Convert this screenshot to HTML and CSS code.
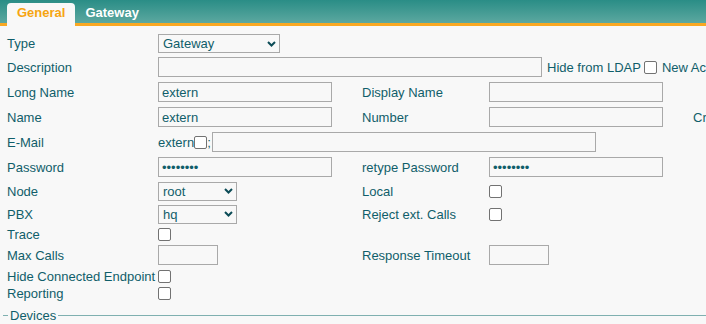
FILE: index.html
```html
<!DOCTYPE html>
<html lang="en">
<head>
  <meta charset="UTF-8">
  <meta name="viewport" content="width=device-width, initial-scale=1.0">
  <title>Gateway extern</title>
  <link rel="stylesheet" href="styles.css">
</head>
<body>
  <div class="tabs">
    <div class="tab tab-active">General</div>
    <div class="tab">Gateway</div>
  </div>

  <form class="config">
    <label class="lbl">Type</label>
    <div class="fld">
      <div class="select w-type"><span>Gateway</span><svg width="9" height="6" viewBox="0 0 9 6"><path d="M1 1 L4.5 4.5 L8 1" fill="none" stroke="#0c4c57" stroke-width="2"/></svg></div>
    </div>

    <label class="lbl">Description</label>
    <div class="fld span3">
      <input type="text" class="text w-desc">
      <span class="after">Hide from LDAP</span>
      <input type="checkbox" class="check gap-l">
      <span class="after">New Account</span>
    </div>

    <label class="lbl">Long Name</label>
    <div class="fld"><input type="text" class="text w-med" value="extern"></div>
    <label class="lbl2">Display Name</label>
    <div class="fld"><input type="text" class="text w-med"></div>

    <label class="lbl">Name</label>
    <div class="fld"><input type="text" class="text w-med" value="extern"></div>
    <label class="lbl2">Number</label>
    <div class="fld"><input type="text" class="text w-med"></div>
    <div class="fld">Create</div>

    <label class="lbl">E-Mail</label>
    <div class="fld span3">
      <span>extern</span><input type="checkbox" class="check mail-check"><span>;</span>
      <input type="text" class="text w-desc mail-input">
    </div>

    <label class="lbl">Password</label>
    <div class="fld"><input type="password" class="text w-med" value="password"></div>
    <label class="lbl2">retype Password</label>
    <div class="fld"><input type="password" class="text w-med" value="password"></div>

    <label class="lbl">Node</label>
    <div class="fld">
      <div class="select w-small"><span>root</span><svg width="9" height="6" viewBox="0 0 9 6"><path d="M1 1 L4.5 4.5 L8 1" fill="none" stroke="#0c4c57" stroke-width="2"/></svg></div>
    </div>
    <label class="lbl2">Local</label>
    <div class="fld"><input type="checkbox" class="check"></div>

    <label class="lbl">PBX</label>
    <div class="fld">
      <div class="select w-small"><span>hq</span><svg width="9" height="6" viewBox="0 0 9 6"><path d="M1 1 L4.5 4.5 L8 1" fill="none" stroke="#0c4c57" stroke-width="2"/></svg></div>
    </div>
    <label class="lbl2">Reject ext. Calls</label>
    <div class="fld"><input type="checkbox" class="check"></div>

    <label class="lbl">Trace</label>
    <div class="fld"><input type="checkbox" class="check"></div>

    <label class="lbl">Max Calls</label>
    <div class="fld"><input type="text" class="text w-num"></div>
    <label class="lbl2">Response Timeout</label>
    <div class="fld"><input type="text" class="text w-num"></div>

    <label class="lbl">Hide Connected Endpoint</label>
    <div class="fld"><input type="checkbox" class="check"></div>

    <label class="lbl">Reporting</label>
    <div class="fld"><input type="checkbox" class="check"></div>
  </form>

  <fieldset class="devices">
    <legend>Devices</legend>
  </fieldset>
</body>
</html>
```

FILE: styles.css
```css
body {
  margin: 0;
  width: 706px;
  height: 324px;
  overflow: hidden;
  background-color: #f8f8f8;
  font-family: "Liberation Sans", Arial, sans-serif;
  font-size: 13px;
  color: #105e6a;
}

.tabs {
  display: flex;
  align-items: flex-end;
  height: 23px;
  padding-left: 7px;
  background: linear-gradient(#2a8d86, #5ca8a0);
  border-bottom: 3px solid #f9a823;
}

.tab {
  height: 23px;
  line-height: 20px;
  margin-bottom: -3px;
  padding: 0 10px;
  box-sizing: border-box;
  font-weight: bold;
  color: #ffffff;
  white-space: nowrap;
}

.tab-active {
  background-color: #f8f8f8;
  border-radius: 4px 4px 0 0;
  color: #f6a511;
}

.config {
  display: grid;
  grid-template-columns: 151px 204px 127px 204px 60px;
  grid-template-rows: 23px 24px 26px 24px 26px 24px 24px 22px 19px 22px 20px 15px;
  padding: 6px 0 0 7px;
  white-space: nowrap;
}

.lbl {
  grid-column: 1;
  align-self: center;
}

.lbl2 {
  grid-column: 3;
  align-self: center;
}

.fld {
  display: flex;
  align-items: center;
}

.span3 {
  grid-column: span 3;
}

.text {
  height: 20px;
  margin: 0;
  padding: 0 3px;
  box-sizing: border-box;
  border: 1px solid #a9a9a9;
  border-radius: 0;
  background-color: #f8f8f8;
  font-family: inherit;
  font-size: 13px;
  color: #105e6a;
  outline: none;
}

.w-desc { width: 384px; flex: none; }
.w-med { width: 174px; }
.w-num { width: 60px; }

.select {
  display: flex;
  align-items: center;
  justify-content: space-between;
  height: 19px;
  padding: 0 3px 0 4px;
  box-sizing: border-box;
  border: 1px solid #a9a9a9;
  color: #105e6a;
}

.w-type { width: 122px; }
.w-small { width: 79px; }

.check {
  appearance: none;
  flex: none;
  width: 13px;
  height: 13px;
  margin: 0;
  border: 1px solid #727272;
  border-radius: 2px;
  background-color: #ffffff;
}

.after {
  margin-left: 5px;
}

.gap-l {
  margin-left: 3px;
}

.mail-check {
  margin: 0;
}

.mail-input {
  margin-left: 1px;
}

.devices {
  margin: 7px 0 0 3px;
  padding: 0 0 0 5px;
  border: none;
  border-top: 1px solid #7fb0b0;
}

.devices legend {
  padding: 0 2px;
  line-height: 15px;
}
```
